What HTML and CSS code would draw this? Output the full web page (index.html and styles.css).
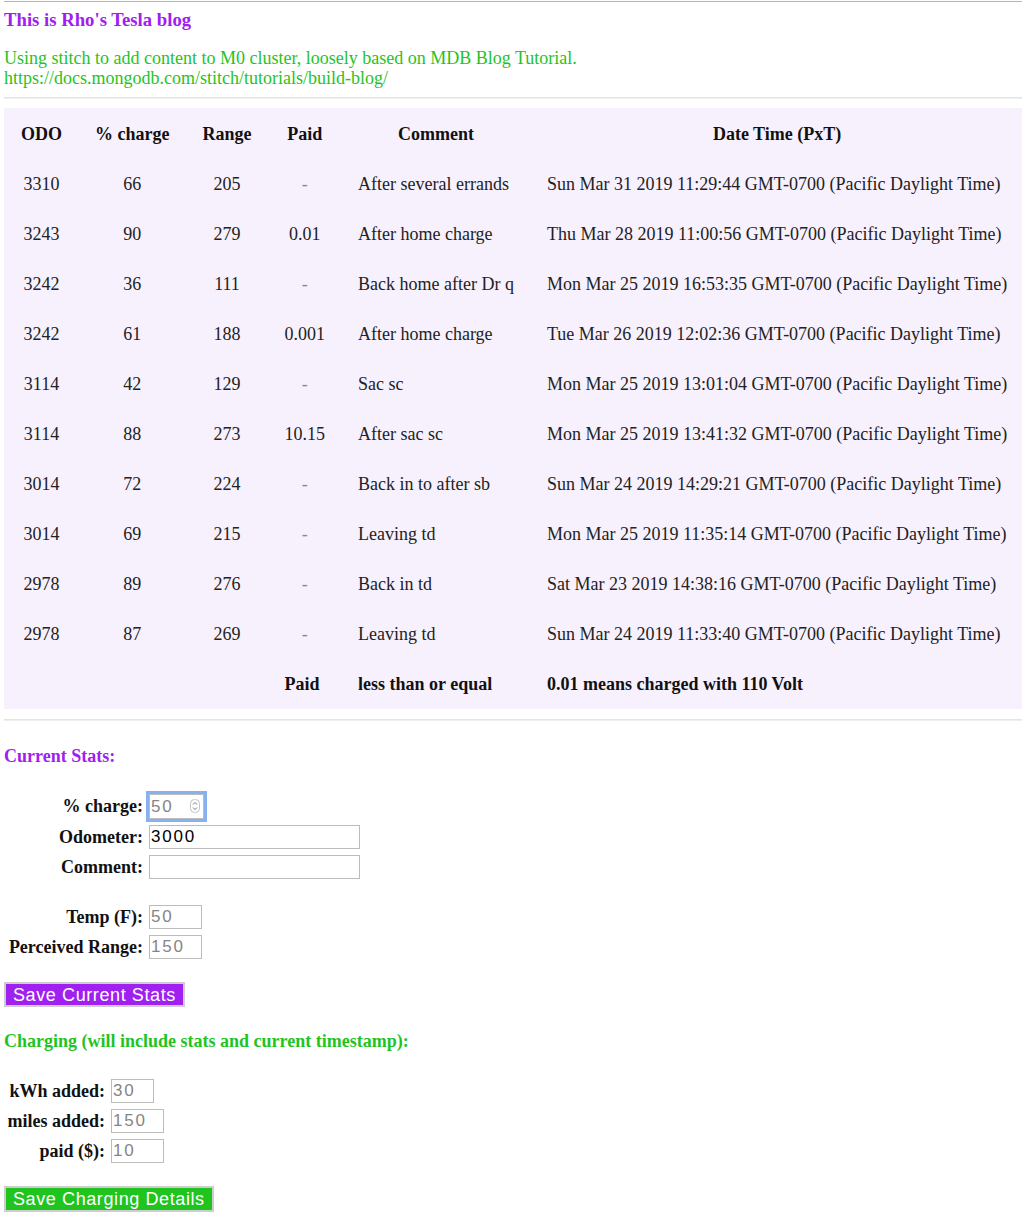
FILE: index.html
```html
<!DOCTYPE html>
<html>
<head>
<meta charset="utf-8">
<title>Rho's Tesla blog</title>
<link rel="stylesheet" href="styles.css">
</head>
<body>
<div class="topline"></div>
<h3 class="title">This is Rho's Tesla blog</h3>
<p class="intro">Using stitch to add content to M0 cluster, loosely based on MDB Blog Tutorial.<br>https://docs.mongodb.com/stitch/tutorials/build-blog/</p>
<hr class="rule">
<table class="log">
  <thead>
    <tr><th>ODO</th><th>% charge</th><th>Range</th><th>Paid</th><th>Comment</th><th>Date Time (PxT)</th></tr>
  </thead>
  <tbody>
    <tr><td class="c">3310</td><td class="c">66</td><td class="c">205</td><td class="c dash">-</td><td>After several errands</td><td>Sun Mar 31 2019 11:29:44 GMT-0700 (Pacific Daylight Time)</td></tr>
    <tr><td class="c">3243</td><td class="c">90</td><td class="c">279</td><td class="c">0.01</td><td>After home charge</td><td>Thu Mar 28 2019 11:00:56 GMT-0700 (Pacific Daylight Time)</td></tr>
    <tr><td class="c">3242</td><td class="c">36</td><td class="c">111</td><td class="c dash">-</td><td>Back home after Dr q</td><td>Mon Mar 25 2019 16:53:35 GMT-0700 (Pacific Daylight Time)</td></tr>
    <tr><td class="c">3242</td><td class="c">61</td><td class="c">188</td><td class="c">0.001</td><td>After home charge</td><td>Tue Mar 26 2019 12:02:36 GMT-0700 (Pacific Daylight Time)</td></tr>
    <tr><td class="c">3114</td><td class="c">42</td><td class="c">129</td><td class="c dash">-</td><td>Sac sc</td><td>Mon Mar 25 2019 13:01:04 GMT-0700 (Pacific Daylight Time)</td></tr>
    <tr><td class="c">3114</td><td class="c">88</td><td class="c">273</td><td class="c">10.15</td><td>After sac sc</td><td>Mon Mar 25 2019 13:41:32 GMT-0700 (Pacific Daylight Time)</td></tr>
    <tr><td class="c">3014</td><td class="c">72</td><td class="c">224</td><td class="c dash">-</td><td>Back in to after sb</td><td>Sun Mar 24 2019 14:29:21 GMT-0700 (Pacific Daylight Time)</td></tr>
    <tr><td class="c">3014</td><td class="c">69</td><td class="c">215</td><td class="c dash">-</td><td>Leaving td</td><td>Mon Mar 25 2019 11:35:14 GMT-0700 (Pacific Daylight Time)</td></tr>
    <tr><td class="c">2978</td><td class="c">89</td><td class="c">276</td><td class="c dash">-</td><td>Back in td</td><td>Sat Mar 23 2019 14:38:16 GMT-0700 (Pacific Daylight Time)</td></tr>
    <tr><td class="c">2978</td><td class="c">87</td><td class="c">269</td><td class="c dash">-</td><td>Leaving td</td><td>Sun Mar 24 2019 11:33:40 GMT-0700 (Pacific Daylight Time)</td></tr>
  </tbody>
  <tfoot>
    <tr><td></td><td></td><td></td><td class="b">Paid</td><td class="b">less than or equal</td><td class="b">0.01 means charged with 110 Volt</td></tr>
  </tfoot>
</table>
<hr class="rule rule2">

<h3 class="sec purple">Current Stats:</h3>
<div class="form stats">
  <label class="lbl">% charge:</label>
  <span class="numwrap"><input class="inp w55 focus" type="text" placeholder="50"><svg class="spin" width="10" height="14" viewBox="0 0 10 14"><rect x="0.5" y="0.5" width="9" height="13" rx="4" fill="#fff" stroke="#c4c4c4"/><path d="M3 5.5 L5 3.5 L7 5.5 M3 8.5 L5 10.5 L7 8.5" fill="none" stroke="#666" stroke-width="0.9"/></svg></span>
  <label class="lbl">Odometer:</label>
  <span><input class="inp w211" type="text" value="3000"></span>
  <label class="lbl">Comment:</label>
  <span><input class="inp w211" type="text"></span>
  <div class="spacer"></div>
  <label class="lbl">Temp (F):</label>
  <span><input class="inp w53" type="text" placeholder="50"></span>
  <label class="lbl">Perceived Range:</label>
  <span><input class="inp w53" type="text" placeholder="150"></span>
</div>
<button class="btn btn-purple">Save Current Stats</button>

<h3 class="sec green">Charging (will include stats and current timestamp):</h3>
<div class="form charge">
  <label class="lbl">kWh added:</label>
  <span><input class="inp w43" type="text" placeholder="30"></span>
  <label class="lbl">miles added:</label>
  <span><input class="inp w53" type="text" placeholder="150"></span>
  <label class="lbl">paid ($):</label>
  <span><input class="inp w53" type="text" placeholder="10"></span>
</div>
<button class="btn btn-green btn2">Save Charging Details</button>
</body>
</html>
```
FILE: styles.css
```css
html {
  overflow-x: hidden;
}
body {
  margin: 0 0 0 4px;
  font-family: "Liberation Serif", "Times New Roman", serif;
  font-size: 18px;
  color: #111;
  background: #fff;
}
.topline {
  margin: 1px 0 0 -4px;
  border-top: 1px solid #b4b4b4;
  height: 0;
}
.title {
  margin: 7px 0 0;
  font-size: 18.72px;
  line-height: 22px;
  font-weight: bold;
  color: #a020f0;
}
.intro {
  margin: 17px 0 0;
  line-height: 20px;
  color: #1fc41f;
}
.rule {
  margin: 9px 0 0;
  height: 0;
  border: 0;
  border-top: 1px solid #e4e4e4;
  border-bottom: 1px solid #efefef;
}
.rule2 {
  margin-top: 10px;
}
.log {
  margin-top: 9px;
  border-spacing: 1px;
  background: #f7f1fe;
  white-space: nowrap;
  font-size: 18px;
}
.log th,
.log td {
  height: 49px;
  padding: 0 16px;
  line-height: 20px;
  box-sizing: border-box;
}
.log th {
  font-weight: bold;
  text-align: center;
  color: #111;
}
.log td {
  text-align: left;
  color: #222;
}
.log td.c {
  text-align: center;
}
.log td.dash {
  color: #8a8a8a;
}
.log td.b {
  font-weight: bold;
  color: #111;
}
.sec {
  margin: 24px 0 0;
  font-size: 18px;
  line-height: 22px;
  font-weight: bold;
}
.purple {
  color: #a020f0;
}
.green {
  color: #1fc41f;
  margin-top: 23px;
}
.form {
  display: grid;
  grid-template-columns: 139px auto;
  column-gap: 6px;
  row-gap: 6px;
  margin-top: 27px;
  justify-items: start;
}
.form.charge {
  grid-template-columns: 101px auto;
}
.lbl {
  justify-self: end;
  font-weight: bold;
  font-size: 18px;
  line-height: 24px;
  color: #111;
  white-space: nowrap;
}
.spacer {
  grid-column: 1 / 3;
  height: 14px;
}
.inp {
  display: block;
  box-sizing: border-box;
  height: 24px;
  margin: 0;
  padding: 0 1px;
  border: 1px solid #bcbcbc;
  font-family: "Liberation Sans", Arial, sans-serif;
  font-size: 17px;
  letter-spacing: 1.8px;
  color: #000;
  background: #fff;
  outline: none;
}
.inp::placeholder {
  color: #858585;
}
.w43 { width: 43px; }
.w53 { width: 53px; }
.w55 { width: 55px; }
.w211 { width: 211px; }
.focus {
  height: 25px;
  box-shadow: 0 0 0 3px #86b0ee;
}
.numwrap {
  position: relative;
  display: block;
}
.spin {
  position: absolute;
  left: 41px;
  top: 5px;
}
.btn {
  display: block;
  margin: 23px 0 0;
  height: 25px;
  padding: 0 7px;
  border: 2px solid #cdcdcd;
  font-family: "Liberation Sans", Arial, sans-serif;
  font-size: 18px;
  letter-spacing: 0.6px;
  line-height: 20px;
  color: #fff;
  cursor: pointer;
}
.btn-purple {
  background: #a020f0;
}
.btn-green {
  background: #1fc41f;
}
.btn2 {
  height: 26px;
}
```
